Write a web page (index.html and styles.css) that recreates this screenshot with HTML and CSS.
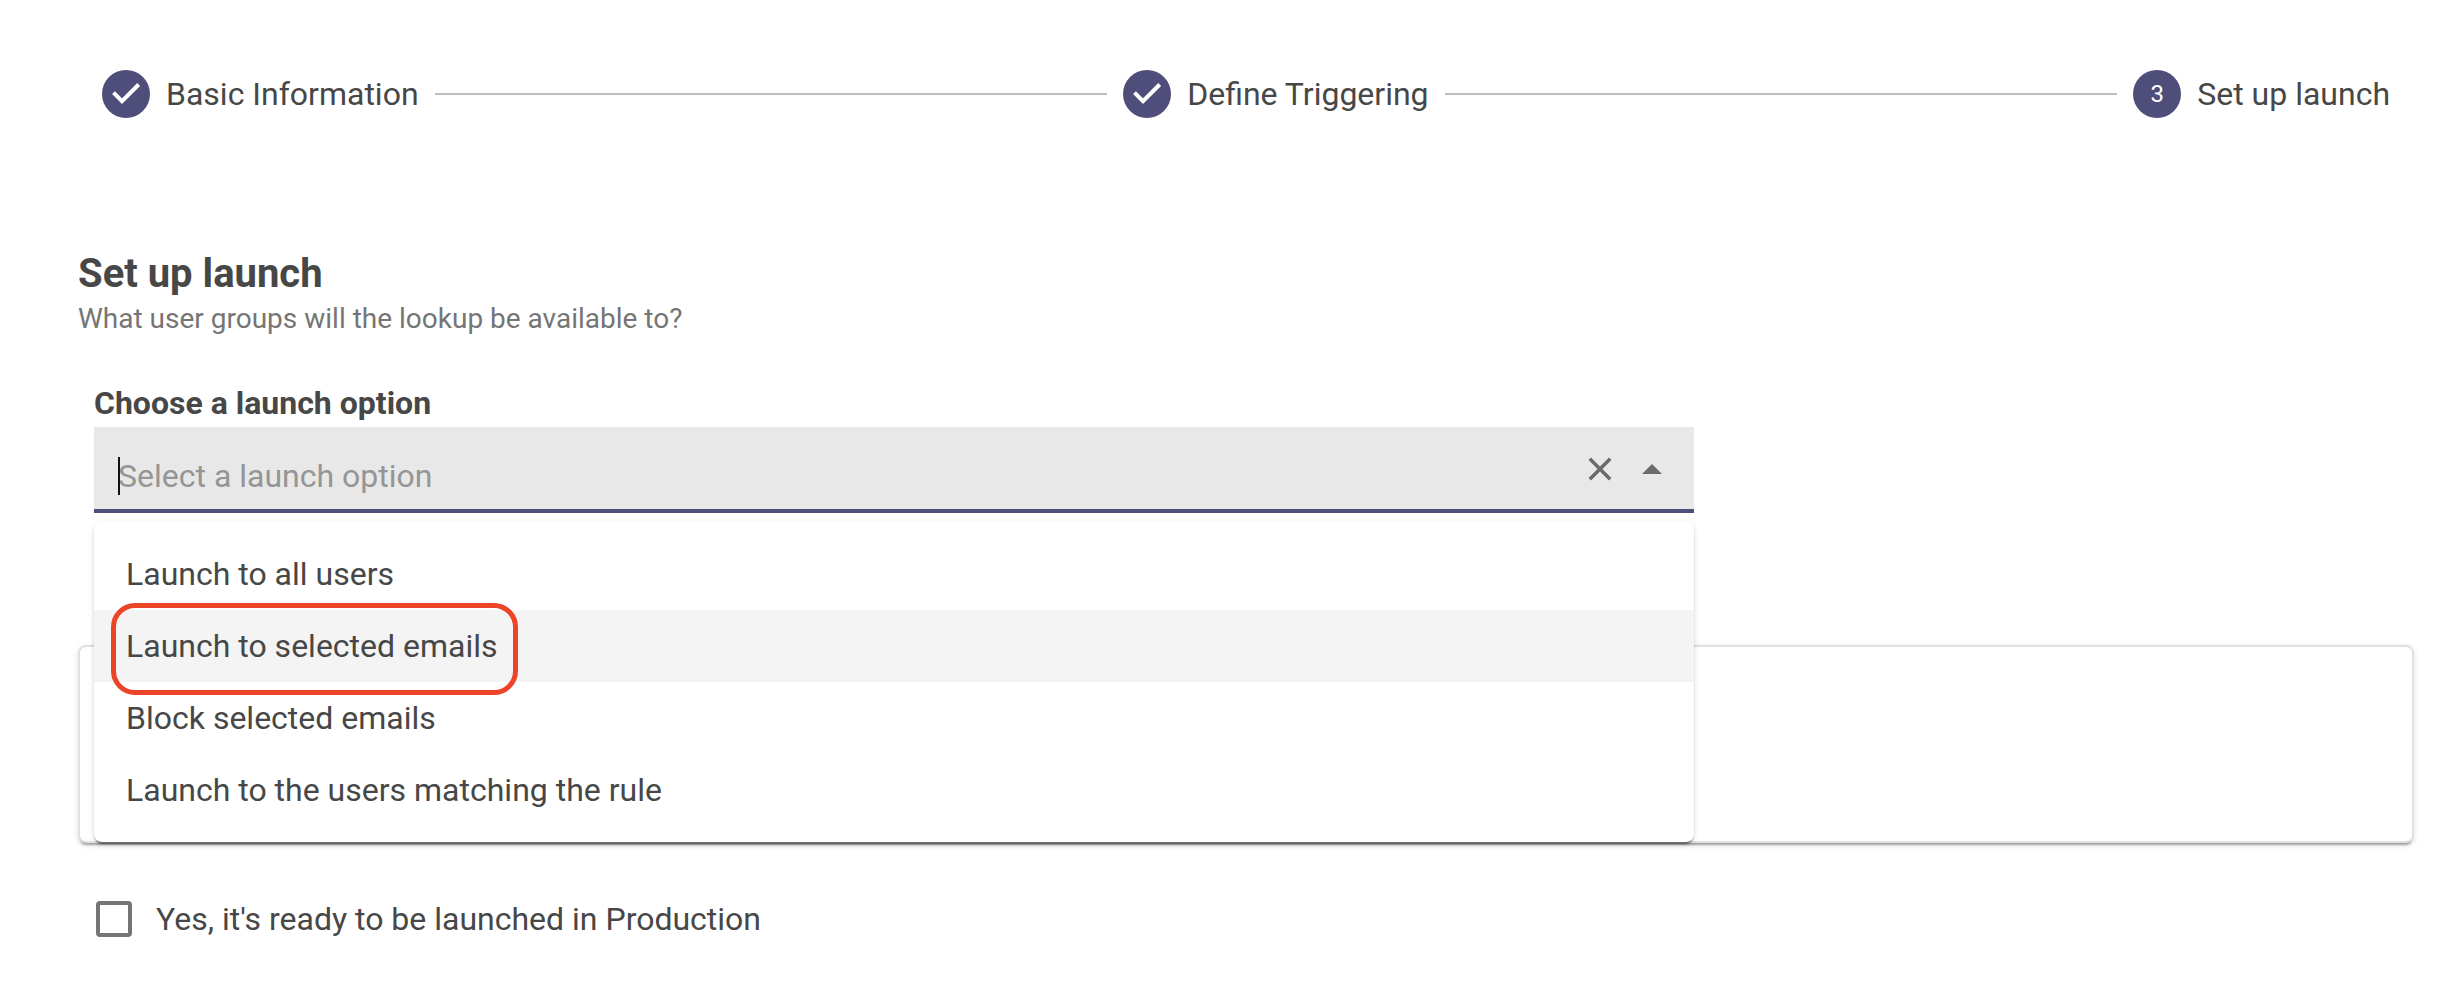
FILE: index.html
```
<!DOCTYPE html>
<html lang="en">
<head>
<meta charset="utf-8">
<title>Set up launch</title>
<link rel="stylesheet" href="styles.css">
</head>
<body>
<main class="page">
  <ol class="stepper">
    <li class="step">
      <span class="step-badge"><svg class="check" viewBox="0 0 48 48" aria-hidden="true"><path d="M11.5 22.7L20 31.2 36.7 14.5"/></svg></span>
      <span class="step-label">Basic Information</span>
    </li>
    <li class="step-line" role="presentation"></li>
    <li class="step">
      <span class="step-badge"><svg class="check" viewBox="0 0 48 48" aria-hidden="true"><path d="M11.5 22.7L20 31.2 36.7 14.5"/></svg></span>
      <span class="step-label">Define Triggering</span>
    </li>
    <li class="step-line" role="presentation"></li>
    <li class="step" aria-current="step">
      <span class="step-badge">3</span>
      <span class="step-label">Set up launch</span>
    </li>
  </ol>

  <header class="intro">
    <h1 class="title">Set up launch</h1>
    <p class="subtitle">What user groups will the lookup be available to?</p>
  </header>

  <div class="launch">
    <label class="field-label" for="launch-option">Choose a launch option</label>
    <div class="combo">
      <div class="field">
        <input class="field-input" id="launch-option" type="text" role="combobox" aria-expanded="true" aria-controls="launch-list" placeholder="Select a launch option">
        <button class="icon-button" type="button" aria-label="Clear"><svg class="clear" viewBox="0 0 24 24"><path d="M1.8 1.8L22.2 22.2M22.2 1.8L1.8 22.2"/></svg></button>
        <button class="icon-button" type="button" aria-label="Close list"><svg class="arrow" viewBox="0 0 20 10"><path d="M0 10L10 0l10 10z"/></svg></button>
      </div>
      <ul class="menu" id="launch-list" role="listbox">
        <li class="option" role="option">Launch to all users</li>
        <li class="option option-active" role="option"><span class="marked">Launch to selected emails</span></li>
        <li class="option" role="option">Block selected emails</li>
        <li class="option" role="option">Launch to the users matching the rule</li>
      </ul>
    </div>
  </div>

  <section class="card"></section>

  <label class="ready">
    <input class="ready-box" type="checkbox">
    <span>Yes, it's ready to be launched in Production</span>
  </label>
</main>
</body>
</html>
```
FILE: styles.css
```
* { box-sizing: border-box; }

body {
  margin: 0;
  background: #fff;
  color: #474747;
  font-family: Roboto, "Liberation Sans", sans-serif;
  font-size: 32px;
  line-height: 48px;
}

.page { padding: 70px 46px 36px 78px; }

.stepper {
  display: flex;
  align-items: center;
  gap: 16px;
  margin: 0;
  padding: 0 24px;
  list-style: none;
}

.step {
  display: flex;
  align-items: center;
  gap: 16px;
  white-space: nowrap;
}

.step-badge {
  display: flex;
  align-items: center;
  justify-content: center;
  width: 48px;
  height: 48px;
  border-radius: 50%;
  background: #4f4d7a;
  color: #fff;
  font-size: 24px;
}

.check {
  width: 48px;
  height: 48px;
  fill: none;
  stroke: #fff;
  stroke-width: 4;
}

.step-line { flex: 1; height: 2px; background: #bdbdbd; }

.intro { padding-top: 132px; }

.title {
  margin: 0;
  font-size: 40px;
  font-weight: 700;
  line-height: 48px;
}

.subtitle {
  margin: 0;
  padding-top: 1px;
  color: #757575;
  font-size: 28px;
  line-height: 40px;
}

.launch { padding: 40px 16px 0; }

.field-label {
  display: block;
  font-weight: 700;
}

.combo { position: relative; max-width: 1600px; }

.field {
  display: flex;
  align-items: center;
  height: 86px;
  padding: 2px 16px 0 24px;
  border-bottom: 4px solid #4f4d7a;
  background: #e8e8e8;
}

/* Text caret at the start of the empty field */
.field::before {
  content: "";
  position: absolute;
  top: 30px;
  left: 24px;
  width: 2px;
  height: 38px;
  background: #111;
}

.field-input {
  flex: 1;
  min-width: 0;
  padding: 14px 0 0;
  border: 0;
  outline: 0;
  background: transparent;
  color: inherit;
  font: inherit;
}

.field-input::placeholder { color: #959595; opacity: 1; }

.icon-button {
  display: flex;
  align-items: center;
  justify-content: center;
  width: 52px;
  height: 52px;
  padding: 0;
  border: 0;
  background: transparent;
}

.clear {
  width: 24px;
  height: 24px;
  fill: none;
  stroke: #6b6b6b;
  stroke-width: 3.5;
}

.arrow { width: 20px; height: 10px; fill: #6b6b6b; }

.menu {
  position: absolute;
  top: 95px;
  left: 0;
  right: 0;
  z-index: 1;
  margin: 0;
  padding: 16px 0;
  border-radius: 8px;
  background: #fff;
  box-shadow: 0 4px 2px -2px rgba(0, 0, 0, 0.4), 0 2px 2px rgba(0, 0, 0, 0.14), 0 2px 6px rgba(0, 0, 0, 0.12);
  list-style: none;
}

.option { padding: 12px 32px; }

.option-active { background: #f4f4f4; }

.marked { position: relative; }

/* Highlight ring drawn round the option text */
.marked::after {
  content: "";
  position: absolute;
  inset: -24px -20px -30px -15px;
  border: 5px solid #ec4427;
  border-radius: 24px;
}

.card {
  min-height: 198px;
  margin-top: 132px;
  border: 2px solid #e0e0e0;
  border-radius: 8px;
  background: #fff;
  box-shadow: 0 4px 2px -2px rgba(0, 0, 0, 0.3), 0 2px 6px rgba(0, 0, 0, 0.12);
}

.ready {
  display: inline-flex;
  align-items: center;
  gap: 24px;
  padding: 52px 18px 0;
}

.ready-box {
  width: 36px;
  height: 36px;
  margin: 0;
  border: 4px solid #757575;
  border-radius: 4px;
  background: #fff;
  appearance: none;
}
```
